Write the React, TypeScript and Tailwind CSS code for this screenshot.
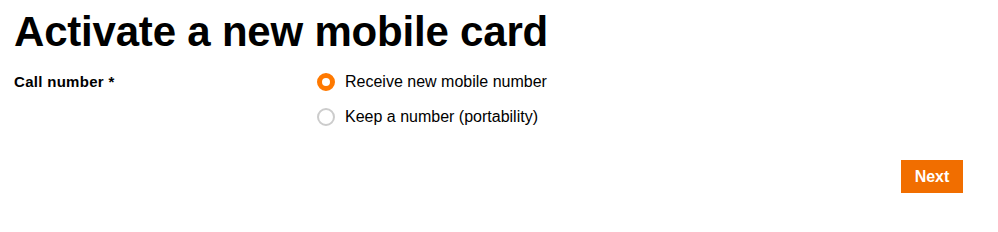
import React, { useState } from 'react';

const options = [
  { id: 'new', label: 'Receive new mobile number' },
  { id: 'keep', label: 'Keep a number (portability)' },
];

export default function App() {
  const [value, setValue] = useState('new');

  return (
    <div className="w-[998px] h-[232px] bg-white px-[14px] pr-[35px] text-black" style={{ fontFamily: '"Liberation Sans", Arial, sans-serif' }}>
      <h1 className="pt-[9px] text-[42px] font-bold leading-[46px] tracking-[-0.2px]">Activate a new mobile card</h1>
      <div className="mt-[17px] flex">
        <div className="w-[303px] text-[15px] font-bold leading-[20px] tracking-[0.3px]">Call number *</div>
        <div className="flex flex-col gap-[15px]">
          {options.map((o) => {
            const checked = value === o.id;
            return (
              <label key={o.id} className="flex items-center gap-[10px] cursor-pointer" onClick={() => setValue(o.id)}>
                <span
                  className={`w-[18px] h-[18px] rounded-full bg-white ${checked ? 'border-[5px] border-[#ff7900]' : 'border-2 border-[#cccccc]'}`}
                />
                <span className="text-[16px] leading-[20px]">{o.label}</span>
              </label>
            );
          })}
        </div>
      </div>
      <div className="mt-[33px] flex justify-end">
        <button className="h-[33px] w-[62px] bg-[#f16e00] text-white text-[16px] font-bold">Next</button>
      </div>
    </div>
  );
}
